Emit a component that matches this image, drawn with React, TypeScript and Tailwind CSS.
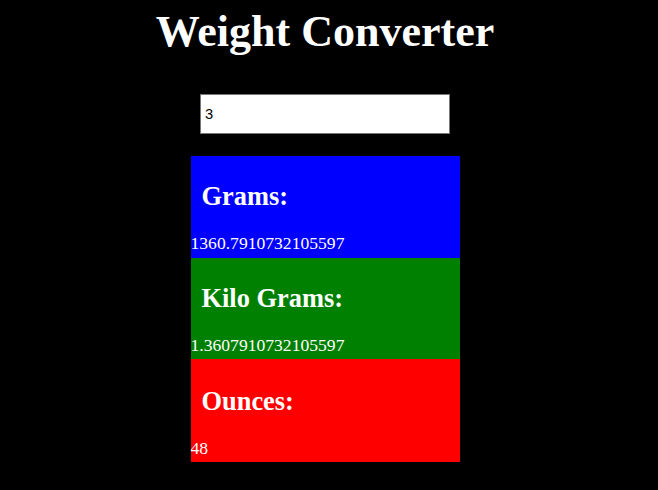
import React, { useState } from 'react';

const serif = { fontFamily: '"Liberation Serif", "Times New Roman", serif' };

const App: React.FC = () => {
  const [pounds, setPounds] = useState('3');
  const lbs = parseFloat(pounds) || 0;

  const results = [
    { label: 'Grams:', value: lbs / 0.0022046, box: 'bg-[#0000ff] pt-[3px] pb-[5px]' },
    { label: 'Kilo Grams:', value: lbs / 2.2046, box: 'bg-[#008000] pt-[3px] pb-[4px]' },
    { label: 'Ounces:', value: lbs * 16, box: 'bg-[#ff0000] pt-[5px] pb-[4px]' },
  ];

  return (
    <div className="min-h-[490px] bg-black text-white" style={serif}>
      <div className="w-[650px] flex flex-col items-center">
        <h1 className="mt-[7px] text-[44px] leading-[50px] font-bold">Weight Converter</h1>

        <input
          type="number"
          value={pounds}
          onChange={(e) => setPounds(e.target.value)}
          className="mt-[37px] h-[40px] w-[250px] border border-[#767676] bg-white px-[4px] text-[14.67px] text-black outline-none"
          style={{ fontFamily: '"Liberation Sans", Arial, sans-serif' }}
        />

        <div className="mt-[22px] flex w-[269px] flex-col">
          {results.map((r) => (
            <div key={r.label} className={r.box}>
              <h2 className="my-[22px] pl-[11px] text-[26.4px] leading-[30px] font-bold">{r.label}</h2>
              <div className="text-[17.6px] leading-[20px]">{r.value}</div>
            </div>
          ))}
        </div>
      </div>
    </div>
  );
};

export default App;
